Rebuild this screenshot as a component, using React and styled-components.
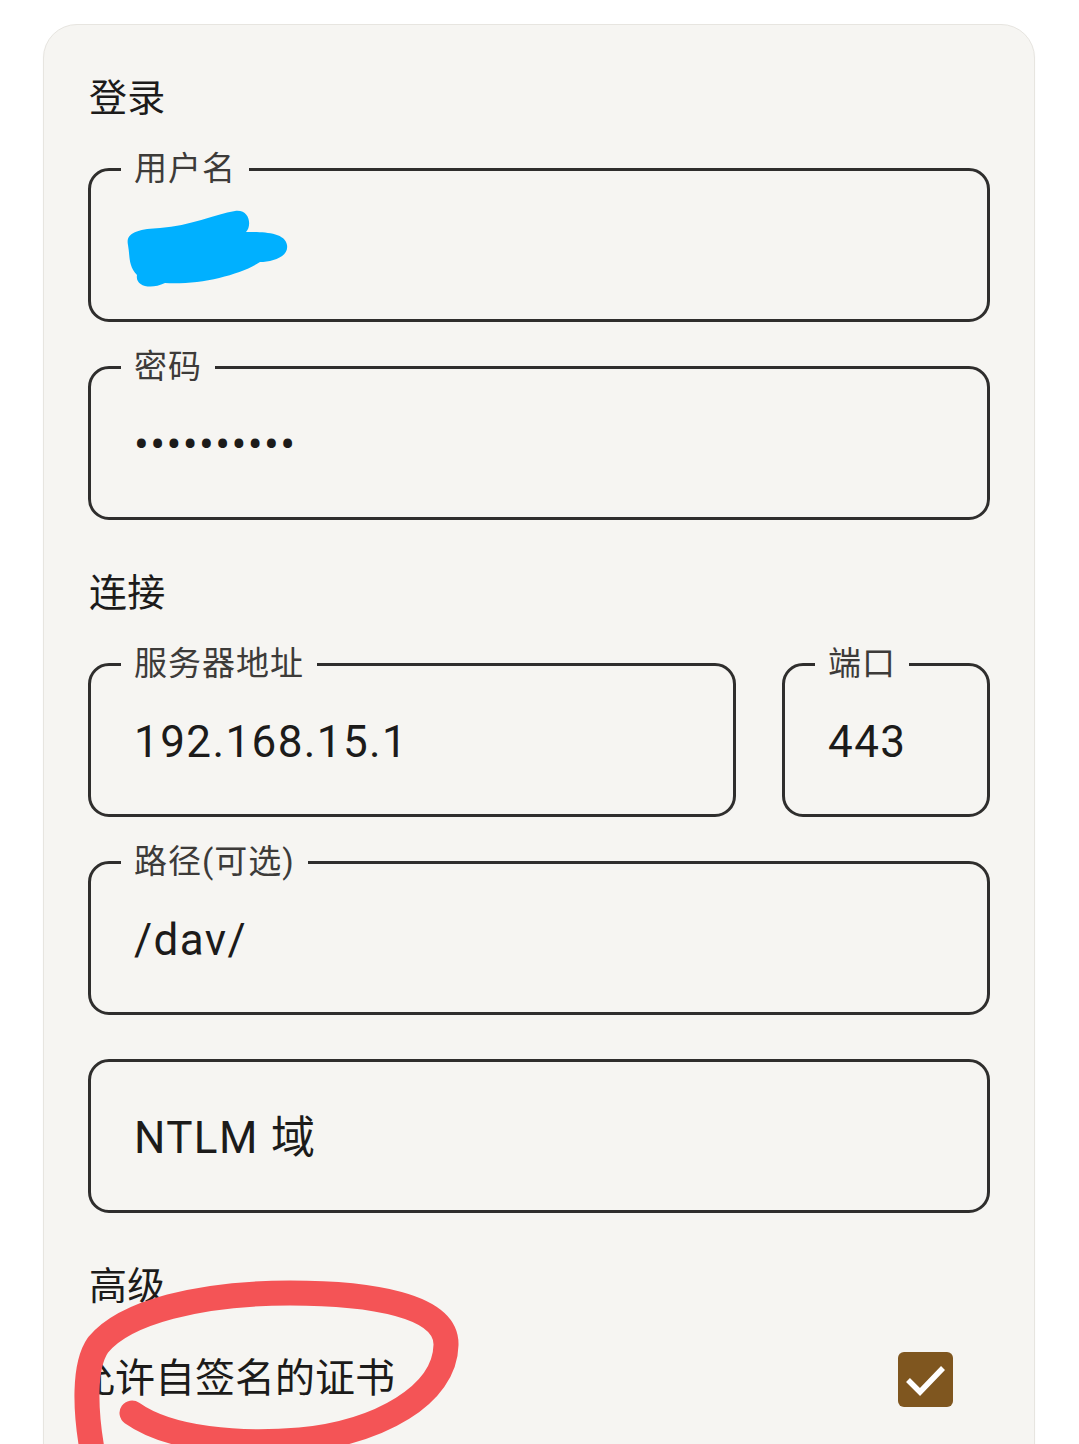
import styled, { createGlobalStyle } from 'styled-components';

const GlobalStyle = createGlobalStyle`
  html, body {
    margin: 0;
    padding: 0;
    background: #ffffff;
  }

  body {
    font-family: Roboto, "Noto Sans CJK SC", sans-serif;
    color: #1c1b1a;
  }
`;

const Page = styled.div`
  position: relative;
  height: 1444px;
  overflow: hidden;
  padding: 24px 43px 0;
  box-sizing: border-box;
`;

const Card = styled.section`
  width: 992px;
  box-sizing: border-box;
  min-height: 1500px;
  padding: 0 44px;
  background: #f6f5f2;
  border: 1px solid #e7e5e0;
  border-radius: 34px;
  box-shadow: 0 1px 2px rgba(0, 0, 0, 0.04);
`;

const Title = styled.h2`
  margin: 49px 0 ${(p) => p.$after ?? 46}px 1px;
  font-size: 38px;
  line-height: 48px;
  font-weight: 400;
  letter-spacing: 0.3px;
  color: #1c1b1a;
`;

const Stack = styled.div`
  display: flex;
  flex-direction: column;
  gap: 44px;
`;

const Row = styled.div`
  display: grid;
  grid-template-columns: 1fr 208px;
  gap: 46px;
`;

const Field = styled.div`
  position: relative;
  height: 154px;
  box-sizing: border-box;
  display: flex;
  align-items: center;
  padding-left: 43px;
  border: 3px solid #2f2e2d;
  border-radius: 21px;
`;

const Label = styled.span`
  position: absolute;
  top: -22px;
  left: 30px;
  padding: 0 13px;
  background: #f6f5f2;
  font-size: 33px;
  line-height: 40px;
  letter-spacing: 1px;
  color: #3d3b39;
`;

const Value = styled.span`
  font-size: 44px;
  line-height: 52px;
  margin-top: 4px;
  letter-spacing: 1.4px;
  color: #1c1b1a;
`;

const CheckRow = styled.div`
  display: flex;
  align-items: center;
  justify-content: space-between;
  height: 110px;
  margin-left: -13px;
  padding-right: 37px;
`;

const CheckText = styled.span`
  font-size: 40px;
  line-height: 52px;
  color: #1c1b1a;
`;

const Box = styled.span`
  width: 55px;
  height: 55px;
  border-radius: 6px;
  background: #7f561f;
  display: flex;
  align-items: center;
  justify-content: center;
`;

const Marks = styled.svg`
  position: absolute;
  top: 0;
  left: 0;
  pointer-events: none;
`;

const TextField = ({ label, value }) => (
  <Field>
    {label && <Label>{label}</Label>}
    <Value>{value}</Value>
  </Field>
);

const App = () => {
  return (
    <Page>
      <GlobalStyle />
      <Card>
        <Title>登录</Title>
        <Stack>
          <TextField label="用户名" value="" />
          <TextField label="密码" value="••••••••••" />
        </Stack>

        <Title>连接</Title>
        <Stack>
          <Row>
            <TextField label="服务器地址" value="192.168.15.1" />
            <TextField label="端口" value="443" />
          </Row>
          <TextField label="路径(可选)" value="/dav/" />
          <TextField value="NTLM 域" />
        </Stack>

        <Title $after={14}>高级</Title>
        <CheckRow>
          <CheckText>允许自签名的证书</CheckText>
          <Box>
            <svg width="55" height="55" viewBox="0 0 55 55">
              <polyline
                points="10,28 22,40 45,16"
                fill="none"
                stroke="#ffffff"
                strokeWidth="5.5"
              />
            </svg>
          </Box>
        </CheckRow>
      </Card>

      <Marks width="1079" height="1444" viewBox="0 0 1079 1444">
        <path
          d="M128 245 C125 232 140 229 160 228 C190 226 215 214 235 211 C250 209 252 226 246 232 C262 232 285 232 287 245 C289 257 272 262 260 262 C240 275 200 285 165 283 C150 290 135 286 137 275 C128 266 130 255 128 245 Z"
          fill="#00b0ff"
        />
        <path
          d="M132 1413 C170 1440 240 1445 300 1440 C380 1432 445 1395 446 1345 C447 1305 370 1293 290 1293 C200 1293 125 1312 98 1345 C84 1365 84 1410 94 1460"
          fill="none"
          stroke="#f45456"
          strokeWidth="25"
          strokeLinecap="round"
        />
      </Marks>
    </Page>
  );
};

export default App;
